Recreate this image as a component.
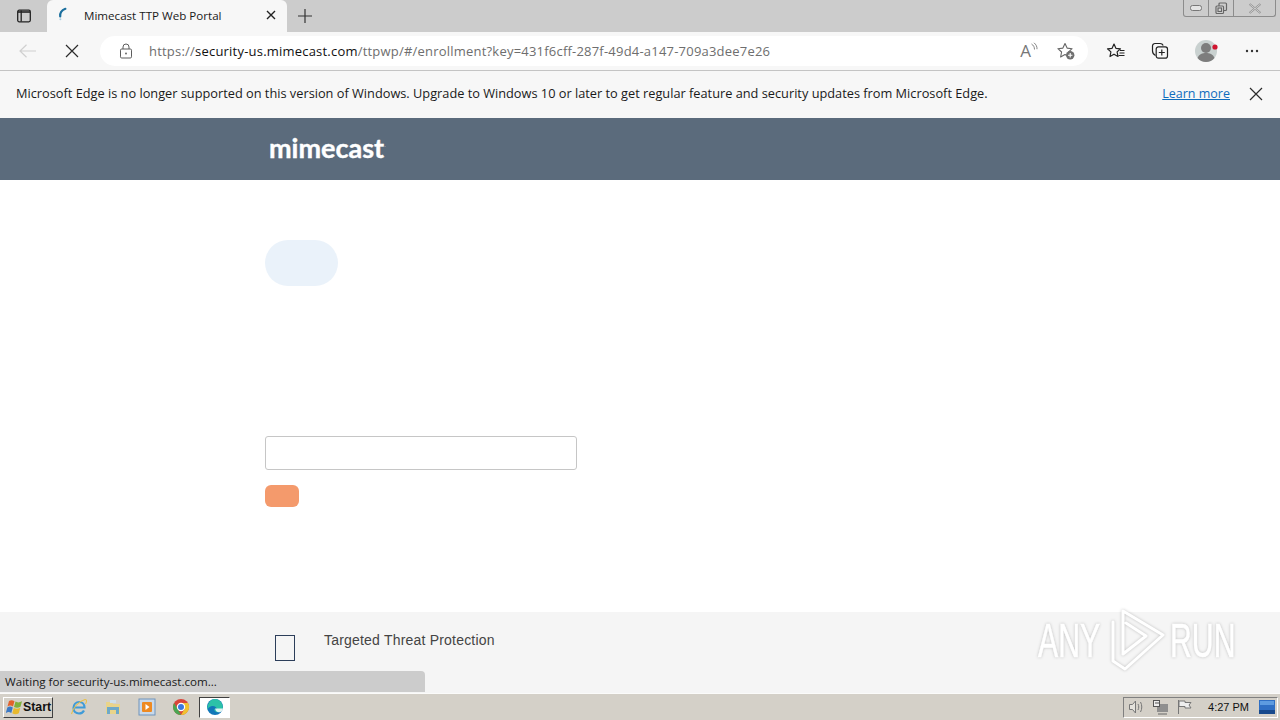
<div class="page">
  <div class="tabstrip">
    <button class="tabicon" aria-label="Tabs">
      <svg width="16" height="16" viewBox="0 0 16 16" fill="none" stroke="#222" stroke-width="1.3"><rect x="1.700" y="2.200" width="12.600" height="11.600" rx="1.500"/><path d="M5.200 2.500v11" /><path d="M2 3.200h12v1.600H2z" fill="#222" stroke="none"/></svg>
    </button>
    <div class="tab">
      <svg class="spinner" width="16" height="16" viewBox="0 0 16 16" fill="none"><path d="M4.200 9.500C3.900 6.300 5.600 3.200 9.400 1.800" stroke="#1b6f9e" stroke-width="2.200" stroke-linecap="round" fill="none"/><circle cx="4.400" cy="12.300" r="1" fill="#a9cfe4"/></svg>
      <span class="tabtitle">Mimecast TTP Web Portal</span>
      <svg class="tabclose" width="12" height="12" viewBox="0 0 12 12" stroke="#222" stroke-width="1.400"><path d="M2 2l8 8M10 2l-8 8"/></svg>
    </div>
    <svg class="newtab" width="16" height="16" viewBox="0 0 16 16" stroke="#333" stroke-width="1.200"><path d="M8 1v14M1 8h14"/></svg>
    <div class="winbtns">
      <span class="wb min"><svg width="14" height="8" viewBox="0 0 14 8" fill="#e4e4e4" stroke="#777"><rect x="1.500" y="1.500" width="11" height="5" rx="2"/></svg></span>
      <span class="wb max"><svg width="14" height="13" viewBox="0 0 14 13" fill="none" stroke="#666" stroke-width="1.200"><rect x="5" y="1" width="7.500" height="7.500" rx="1"/><rect x="2" y="4" width="7.500" height="7.500" rx="1" fill="#d8d8d8"/><rect x="4" y="6" width="3.500" height="3.500"/></svg></span>
      <span class="wb cls"><svg width="16" height="11" viewBox="0 0 16 11" stroke="#8a8a8a" stroke-width="1.800" fill="none"><path d="M2.500 1l11 9M13.500 1l-11 9"/><path d="M2.500 1l11 9M13.500 1l-11 9" stroke="#ececec" stroke-width=".7"/></svg></span>
    </div>
  </div>

  <div class="toolbar">
    <svg class="back" width="20" height="16" viewBox="0 0 20 16" fill="none" stroke="#d0d0d0" stroke-width="1.200"><path d="M2 8h16M8.500 1.800L2 8l6.500 6.200"/></svg>
    <svg class="stop" width="14" height="14" viewBox="0 0 14 14" stroke="#2b2b2b" stroke-width="1.200"><path d="M1 1l12 12M13 1L1 13"/></svg>
    <div class="omnibox">
      <svg class="lock" width="14" height="16" viewBox="0 0 14 16" fill="none" stroke="#5c5c5c"><rect x="1.500" y="6" width="11" height="9" rx="1.200"/><path d="M4 6V4a3 3 0 0 1 6 0v2"/><circle cx="7" cy="10.500" r=".9" fill="#5c5c5c" stroke="none"/></svg>
      <span class="url"><span class="dim">https://</span>security-us.mimecast.com<span class="dim">/ttpwp/#/enrollment?key=431f6cff-287f-49d4-a147-709a3dee7e26</span></span>
      <span class="readaloud">A<svg width="7" height="10" viewBox="0 0 7 10" fill="none" stroke="#777" stroke-width=".9"><path d="M.5 2c2 1.300 3 3 3 5.500M3 .8c2 1.700 3.200 3.700 3 6.400"/></svg></span>
      <svg class="favadd" width="20" height="20" viewBox="0 0 20 20" fill="none"><path d="M9 2.500l2.100 4.600 5 .6-3.700 3.400 1 5L9 13.600 4.600 16l1-5L1.900 7.700l5-.6z" stroke="#666" stroke-width="1.100" stroke-linejoin="round"/><circle cx="14.200" cy="14.200" r="4.200" fill="#6f6f6f"/><path d="M14.200 12v4.400M12 14.200h4.400" stroke="#fff" stroke-width="1.100"/></svg>
    </div>
    <svg class="favs" width="20" height="20" viewBox="0 0 20 20" fill="none" stroke="#222" stroke-width="1.200"><path d="M8 3l1.900 4.300 4.600.5-3.400 3.100.9 4.600L8 13.200l-4 2.300.9-4.600L1.500 7.800l4.600-.5z" stroke-linejoin="round"/><path d="M14 9.500h4.500M13.500 12h5M12.500 14.500h6"/></svg>
    <svg class="coll" width="20" height="20" viewBox="0 0 20 20" fill="none" stroke="#222" stroke-width="1.200"><path d="M5.500 14.500C3.600 13.500 2.500 12 2.500 10V5a2.500 2.500 0 0 1 2.500-2.500h5c1.600 0 2.700.8 3.200 2"/><rect x="6.200" y="5.800" width="11.300" height="11.300" rx="2.200"/><path d="M11.800 8.500v6M8.800 11.500h6"/></svg>
    <svg class="avatar" width="24" height="24" viewBox="0 0 24 24"><circle cx="11" cy="12" r="11" fill="#c9d1d0"/><circle cx="11" cy="9" r="5" fill="#7d7d7d"/><path d="M2.500 19c1.500-4 5-5 8.500-5s7 1 8.500 5a11 11 0 0 1-17 0z" fill="#7d7d7d"/><circle cx="20" cy="8" r="2.600" fill="#d01530"/></svg>
    <svg class="more" width="14" height="4" viewBox="0 0 14 4" fill="#333"><circle cx="2" cy="2" r="1.200"/><circle cx="7" cy="2" r="1.200"/><circle cx="12" cy="2" r="1.200"/></svg>
  </div>

  <div class="infobar">
    <span class="msg">Microsoft Edge is no longer supported on this version of Windows. Upgrade to Windows 10 or later to get regular feature and security updates from Microsoft Edge.</span>
    <a class="learn" href="#learn">Learn more</a>
    <svg class="infoclose" width="14" height="14" viewBox="0 0 14 14" stroke="#2b2b2b" stroke-width="1.200"><path d="M1 1l12 12M13 1L1 13"/></svg>
  </div>

  <header class="brand"><span class="logo">mimecast</span><span class="tm">.</span></header>

  <main class="content">
    <div class="pill"></div>
    <div class="field"></div>
    <div class="submit"></div>
  </main>

  <footer class="foot">
    <span class="glyph"></span>
    <span class="ttp">Targeted Threat Protection</span>
  </footer>

  <div class="taskbar">
    <div class="start">
      <svg width="17" height="16" viewBox="0 0 17 16"><path d="M3 2c2-1 3.500-1 5.500.3L7 7.500C5 6.300 3.500 6.300 1.500 7.500z" fill="#e2622c"/><path d="M9.500 2.600c2 1.200 4 1 6.500-.3L14.500 7.800c-2.300 1.200-4.300 1.300-6.500.2z" fill="#7fb13c"/><path d="M1.300 8.500c2-1.200 3.500-1.200 5.500 0L5.300 14c-2-1.200-3.500-1.200-5.500 0z" fill="#3a78c4"/><path d="M7.800 9c2.200 1.200 4.200 1 6.500-.2L12.800 14.300c-2.300 1.200-4.300 1.300-6.500 0z" fill="#e8b92d"/></svg>
      <span>Start</span>
    </div>
    <div class="quick">
      <svg width="18" height="18" viewBox="0 0 18 18" fill="none"><path d="M3.500 9.500h11c0-3.300-2.300-5.500-5.300-5.500C6 4 3.500 6.500 3.500 10c0 3.300 2.400 5.500 5.500 5.500 2.300 0 4-1 5-3" stroke="#3f9bd8" stroke-width="2.200"/><path d="M1.500 16C3 10 8 3.500 15 1.500c2-.3 1.800 2.500.5 4.500" stroke="#e8c04a" stroke-width="1.100"/></svg>
      <svg width="18" height="18" viewBox="0 0 18 18"><path d="M2 4h6l1 2h7v10H2z" fill="#e9d48a"/><path d="M3 9h12v7h-3v-4H6v4H3z" fill="#6ea9c9"/><rect x="6" y="2" width="6" height="3" fill="#cfe0ea"/></svg>
      <svg width="18" height="18" viewBox="0 0 18 18"><rect x="1" y="1" width="16" height="16" fill="#c9d9ea" stroke="#6f93bb"/><rect x="4" y="4" width="10" height="10" rx="1" fill="#ee8a22"/><path d="M7.500 6l4 3-4 3z" fill="#fff"/></svg>
      <svg width="18" height="18" viewBox="0 0 18 18"><circle cx="9" cy="9" r="8" fill="#d9453a"/><path d="M9 17a8 8 0 0 1-6.900-12L6 11.500z" fill="#4aa653"/><path d="M9 5h7a8 8 0 0 1-7 12l3.500-6z" fill="#f0c230"/><circle cx="9" cy="9" r="3.600" fill="#3b78e0" stroke="#fff" stroke-width="1.200"/></svg>
      <div class="edgebtn">
        <svg width="18" height="18" viewBox="0 0 18 18"><circle cx="9" cy="9" r="8" fill="#1277b8"/><path d="M16.800 10.500c-.6 3-4 4.500-6.500 3.500-2-.8-2.800-2.800-2-4.500C7 11 9 12 11 11c-.4-2-2.500-3.500-5-3-2 .4-4 2-4.800 3.500C1.500 5 5 1 9 1c4 0 8 3.500 7.800 9.500z" fill="#2cc2a8"/><path d="M9 10.500h8c0 1-1 3-2.500 3.500-2 .8-4.500.3-5.500-3.500z" fill="#fff" opacity=".85"/></svg>
      </div>
    </div>
    <div class="tray">
      <svg width="18" height="16" viewBox="0 0 18 16" fill="none" stroke="#777"><path d="M1.500 5.500h3l3-3.500v12l-3-3.500h-3z" fill="#e4e2dc"/><path d="M10 5c1 2 1 4 0 6M12.500 3c1.700 3 1.700 7 0 10"/></svg>
      <svg width="18" height="17" viewBox="0 0 18 17" fill="none"><rect x="5" y="5" width="11" height="8" fill="#8f8f8f"/><rect x="1.500" y="1.500" width="6" height="6" fill="#eee" stroke="#555"/><path d="M4 3v2M6 3v2" stroke="#555"/><path d="M6 15h9" stroke="#666"/></svg>
      <svg width="17" height="16" viewBox="0 0 17 16" fill="#eee" stroke="#777"><path d="M2.500 1v14" /><path d="M3 2h6v1.500h6L13 6l2 3H9V7.500H3z"/></svg>
      <span class="clock">4:27 PM</span>
      <svg width="16" height="14" viewBox="0 0 16 14"><rect width="16" height="14" fill="#2f6fc4"/><rect y="10" width="16" height="4" fill="#17498c"/><rect x="1" y="1" width="14" height="4" fill="#5d9be0"/></svg>
    </div>
  </div>

  <div class="status">Waiting for security-us.mimecast.com...</div>

  <div class="watermark">
    <span>ANY</span>
    <svg class="wmark" width="60" height="62" viewBox="0 0 60 62" fill="none" stroke="#fff" stroke-width="3" stroke-linejoin="round" stroke-linecap="round"><path d="M3 13v39l12 8 38-34L13 2v43M13 45l23-18-20-13"/></svg>
    <span>RUN</span>
  </div>
</div>

<style>
  :global(body) {
    margin: 0;
    background: #fff;
    font-family: "Open Sans", "Noto Sans", "Liberation Sans", sans-serif;
  }
  .page {
    position: relative;
    width: 1280px;
    height: 720px;
    overflow: hidden;
    display: flex;
    flex-direction: column;
    color: #1a1a1a;
  }
  svg { display: block; flex: none; }

  .tabstrip {
    height: 32px;
    background: #cccccc;
    display: flex;
    align-items: flex-end;
    flex: none;
  }
  .tabicon {
    width: 47px;
    height: 32px;
    border: 0;
    padding: 0;
    background: none;
    display: flex;
    align-items: center;
    justify-content: center;
    flex: none;
  }
  .tab {
    width: 240px;
    height: 32px;
    box-sizing: border-box;
    background: #f7f7f7;
    border-radius: 6px 6px 0 0;
    display: flex;
    align-items: center;
    padding: 0 10px 2px 9px;
    flex: none;
  }
  .tabtitle {
    margin-left: 12px;
    font-size: 11.600px;
    flex: 1;
    white-space: nowrap;
  }
  .newtab { align-self: center; margin-left: 10px; margin-top: -1px; }
  .winbtns {
    margin-left: auto;
    margin-right: 4px;
    align-self: flex-start;
    display: flex;
    height: 16px;
    border: 1px solid #8c8c8c;
    border-top: 0;
    border-radius: 0 0 3px 3px;
  }
  .wb {
    height: 16px;
    display: flex;
    align-items: center;
    justify-content: center;
    border-left: 1px solid #8c8c8c;
  }
  .min { width: 24px; border-left: 0; }
  .max { width: 24px; }
  .cls { width: 41px; }

  .toolbar {
    height: 39px;
    box-sizing: border-box;
    background: #f7f7f7;
    border-bottom: 1px solid #c4c4c4;
    display: flex;
    align-items: center;
    flex: none;
    padding-left: 18px;
  }
  .stop { margin-left: 27px; }
  .omnibox {
    margin-left: 21px;
    width: 988px;
    height: 30px;
    box-sizing: border-box;
    background: #fff;
    border-radius: 15px;
    display: flex;
    align-items: center;
    padding-left: 19px;
    flex: none;
  }
  .url {
    margin-left: 16px;
    font-size: 13px;
    letter-spacing: 0.21px;
    white-space: nowrap;
    flex: 1;
    color: #111;
    margin-top: -1px;
  }
  .dim { color: #6e6e6e; }
  .readaloud {
    display: flex;
    align-items: flex-start;
    color: #777;
    font-size: 17px;
    line-height: 18px;
  }
  .favadd { margin-left: 18px; margin-right: 12px; }
  .favs { margin-left: 18px; }
  .coll { margin-left: 24px; }
  .avatar { margin-left: 25px; }
  .more { margin-left: 26px; }

  .infobar {
    height: 47px;
    box-sizing: border-box;
    background: #f7f7f7;
    display: flex;
    align-items: center;
    padding: 0 17px 3px 16px;
    flex: none;
  }
  .msg { font-size: 12.780px; flex: 1; white-space: nowrap; }
  .learn {
    font-size: 12.500px;
    color: #0f6cbd;
    text-decoration: underline;
    margin-right: 19px;
  }
  .infoclose { margin-top: 2px; }

  .brand {
    height: 62px;
    background: #5b6b7c;
    display: flex;
    align-items: center;
    padding: 0 0 3px 269px;
    box-sizing: border-box;
    flex: none;
  }
  .logo {
    color: #fff;
    font-family: Lato, sans-serif;
    font-weight: 700;
    font-size: 27px;
    line-height: 1;
    -webkit-text-stroke: 0.4px #fff;
  }
  .tm { color: #c9d0d8; font-size: 6px; align-self: flex-start; margin-top: 23px; }

  .content {
    flex: 1;
    background: #fff;
    padding: 60px 0 0 265px;
    display: flex;
    flex-direction: column;
    align-items: flex-start;
  }
  .pill {
    width: 73px;
    height: 46px;
    border-radius: 23px;
    background: #eaf2fa;
  }
  .field {
    margin-top: 150px;
    width: 312px;
    height: 34px;
    box-sizing: border-box;
    border: 1px solid #c6c6c6;
    border-radius: 3px;
  }
  .submit {
    margin-top: 15px;
    width: 34px;
    height: 22px;
    border-radius: 6px;
    background: #f49a6c;
  }

  .foot {
    height: 81px;
    background: #f5f5f5;
    display: flex;
    align-items: flex-start;
    padding-left: 275px;
    flex: none;
  }
  .glyph {
    margin-top: 23px;
    width: 18px;
    height: 24px;
    border: 1px solid #2c3e5a;
  }
  .ttp {
    margin-left: 29px;
    margin-top: 19px;
    font-family: "Liberation Sans", sans-serif;
    font-size: 14px;
    letter-spacing: 0.2px;
    line-height: 18px;
    color: #444;
  }

  .taskbar {
    height: 27px;
    box-sizing: border-box;
    background: #d4d0c8;
    border-top: 1px solid #fbfbfa;
    display: flex;
    align-items: center;
    flex: none;
    padding-left: 3px;
  }
  .start {
    width: 50px;
    height: 21px;
    box-sizing: border-box;
    border: 1px solid;
    border-color: #fff #404040 #404040 #fff;
    display: flex;
    align-items: center;
    padding-left: 2px;
    font-family: "Liberation Sans", sans-serif;
    font-weight: 700;
    font-size: 12.300px;
    color: #111;
  }
  .quick {
    display: flex;
    align-items: center;
    gap: 16px;
    margin-left: 17px;
  }
  .edgebtn {
    width: 31px;
    height: 21px;
    box-sizing: border-box;
    margin-left: -7px;
    background: #fff;
    border: 1px solid;
    border-color: #404040 #fff #fff #404040;
    display: flex;
    align-items: center;
    justify-content: center;
  }
  .tray {
    margin-left: auto;
    margin-right: 2px;
    width: 155px;
    height: 21px;
    box-sizing: border-box;
    border: 1px solid;
    border-color: #808080 #fff #fff #808080;
    display: flex;
    align-items: center;
    padding: 0 2px 0 4px;
    gap: 6px;
  }
  .clock {
    font-family: "Liberation Sans", sans-serif;
    font-size: 11px;
    color: #111;
    margin-left: auto;
    margin-right: 4px;
    white-space: nowrap;
  }

  .status {
    position: absolute;
    left: 0;
    top: 671px;
    width: 425px;
    height: 21px;
    box-sizing: border-box;
    padding-left: 5px;
    background: #cccccc;
    border-radius: 0 4px 0 0;
    font-size: 11.600px;
    line-height: 21px;
  }

  .watermark {
    position: absolute;
    left: 1038px;
    top: 609px;
    height: 62px;
    width: 200px;
    display: flex;
    align-items: center;
    color: #fff;
    font-family: "Liberation Sans", sans-serif;
    font-size: 48px;
    filter: drop-shadow(0 0 1.500px rgba(0, 0, 0, 0.22));
  }
  .wmark { margin-left: 8px; margin-right: 0; }
  .watermark span {
    display: inline-block;
    width: 64px;
    transform: scaleX(0.63);
    transform-origin: left center;
    white-space: nowrap;
    -webkit-text-stroke: 0.6px #fff;
  }
</style>
